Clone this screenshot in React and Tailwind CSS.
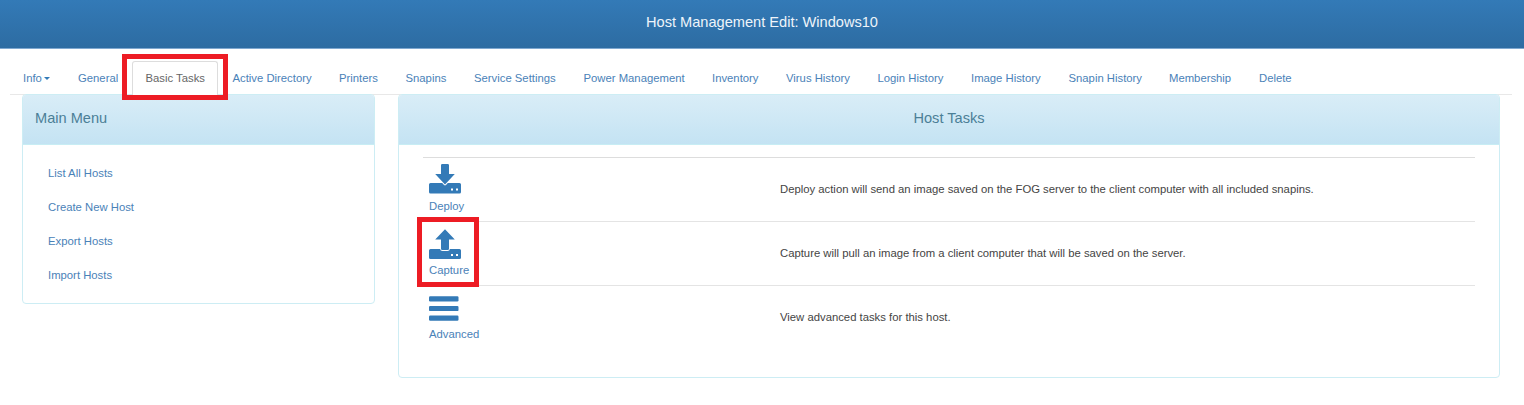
import React from "react";

const tabs = [
  ["Info", "w-[55px]"],
  ["General", "w-[67px]"],
  ["Basic Tasks", "w-[87.5px]"],
  ["Active Directory", "w-[106.5px]"],
  ["Printers", "w-[66.5px]"],
  ["Snapins", "w-[68.5px]"],
  ["Service Settings", "w-[109.5px]"],
  ["Power Management", "w-[128.5px]"],
  ["Inventory", "w-[74px]"],
  ["Virus History", "w-[91.5px]"],
  ["Login History", "w-[93.5px]"],
  ["Image History", "w-[97.5px]"],
  ["Snapin History", "w-[100.5px]"],
  ["Membership", "w-[90px]"],
  ["Delete", "w-[60px]"],
];

function Tab({ label, width }) {
  const active = label === "Basic Tasks";
  return (
    <div
      className={`${width} relative shrink-0 h-full flex items-center whitespace-nowrap pt-px ${
        active ? "pl-[13.5px] text-[#666] z-10" : "pl-[13px] text-[#4a82b8]"
      }`}
    >
      {active && (
        <>
          <div className="absolute left-0 top-0 h-[34px] w-[86px] rounded-t-[3px] border border-b-0 border-[#ddd] bg-white" />
          <div className="absolute -left-[10px] -top-[7px] h-[46px] w-[106px] border-[5px] border-[#ed1c24]" />
        </>
      )}
      <span className="relative">{label}</span>
      {label === "Info" && (
        <span className="ml-[2px] mt-px border-x-[3px] border-t-[3px] border-x-transparent border-t-[#337ab7]" />
      )}
    </div>
  );
}

function TrayIcon({ up }) {
  return (
    <svg width="32" height="30" viewBox="0 0 32 30" fill="#337ab7">
      {up ? (
        <path d="M16 0.3 L25.8 10.6 H20 V19.7 Q20 21 18.7 21 H13.3 Q12 21 12 19.7 V10.6 H6.2 Z" />
      ) : (
        <path d="M12 1.3 Q12 0 13.3 0 H18.7 Q20 0 20 1.3 V10 H25.8 L16 20.5 L6.2 10 H12 Z" />
      )}
      <path
        fillRule="evenodd"
        d={
          up
            ? "M1.5 20 H11.1 Q11.3 22 13.5 22 H18.5 Q20.7 22 20.9 20 H30.5 Q32 20 32 21.5 V28.7 Q32 30 30.5 30 H1.5 Q0 30 0 28.7 V21.5 Q0 20 1.5 20 Z M22 25 V27 H24 V25 Z M27 25 V27 H29 V25 Z"
            : "M1.5 19 H13.2 L15 21 Q16 21.9 17 21 L18.8 19 H30.5 Q32 19 32 20.5 V28 Q32 29.5 30.5 29.5 H1.5 Q0 29.5 0 28 V20.5 Q0 19 1.5 19 Z M22 24.5 V26.5 H24 V24.5 Z M27 24.5 V26.5 H29 V24.5 Z"
        }
      />
    </svg>
  );
}

function MenuIcon() {
  return (
    <svg width="30" height="30" viewBox="0 0 30 30" fill="#337ab7">
      <rect y="4.2" width="29.5" height="5.2" rx="1.2" />
      <rect y="13.9" width="29.5" height="5.2" rx="1.2" />
      <rect y="23.6" width="29.5" height="5.2" rx="1.2" />
    </svg>
  );
}

function Row({ icon, label, text, first, highlight }) {
  return (
    <div
      className={`relative flex h-16 border-t pl-[6px] ${
        first ? "border-[#ddd]" : "border-[#e4e4e4]"
      } ${highlight ? "z-10" : ""}`}
    >
      <div className="flex w-[351px] flex-col">
        <div className={`h-[30px] ${highlight ? "mt-[7px]" : "mt-[6px]"}`}>{icon}</div>
        <span className={`leading-4 text-[#4a82b8] ${highlight ? "mt-[3px]" : "mt-1"}`}>{label}</span>
      </div>
      <p className="mt-[23px] leading-4 text-[#444]">{text}</p>
      {highlight && (
        <div className="absolute -left-[6px] -top-[5px] h-[70px] w-[62px] border-[5px] border-[#ed1c24]" />
      )}
    </div>
  );
}

const panel = "rounded-[4px] border border-[#cdedf4] bg-white";
const heading =
  "flex h-[50px] items-center rounded-t-[3px] border-b border-[#c8edf4] bg-gradient-to-b from-[#d9edf7] to-[#c4e3f3] pb-px text-[14.6px] text-[#4b7f97]";

export default function App() {
  return (
    <div className="h-[405px] overflow-hidden bg-white font-['Liberation_Sans',Arial,sans-serif] text-[11.3px]">
      <header className="flex h-[49px] items-center justify-center border-b border-[#7fa8d0] bg-gradient-to-b from-[#337ab7] to-[#2d6ca2] pb-[3px] text-[14.6px] text-[#eef4fa]">
        Host Management Edit: Windows10
      </header>
      <nav className="ml-[10px] mr-[12px] mt-3 flex h-[34px] border-b border-[#e8e8e8]">
        {tabs.map(([label, width]) => (
          <Tab key={label} label={label} width={width} />
        ))}
      </nav>
      <main className="-mt-px flex items-start gap-[23px] pl-[22px]">
        <section className={`${panel} h-[210px] w-[353px]`}>
          <h2 className={`${heading} pl-3`}>Main Menu</h2>
          <div className="flex flex-col pl-[25px] pt-[11px] text-[#4a82b8]">
            {["List All Hosts", "Create New Host", "Export Hosts", "Import Hosts"].map((s) => (
              <a key={s} className="flex h-[34px] items-center">
                {s}
              </a>
            ))}
          </div>
        </section>
        <section className={`${panel} h-[284px] w-[1102px]`}>
          <h2 className={`${heading} justify-center`}>Host Tasks</h2>
          <div className="mx-6 mt-3">
            <Row
              first
              icon={<TrayIcon />}
              label="Deploy"
              text="Deploy action will send an image saved on the FOG server to the client computer with all included snapins."
            />
            <Row
              highlight
              icon={<TrayIcon up />}
              label="Capture"
              text="Capture will pull an image from a client computer that will be saved on the server."
            />
            <Row icon={<MenuIcon />} label="Advanced" text="View advanced tasks for this host." />
          </div>
        </section>
      </main>
    </div>
  );
}
